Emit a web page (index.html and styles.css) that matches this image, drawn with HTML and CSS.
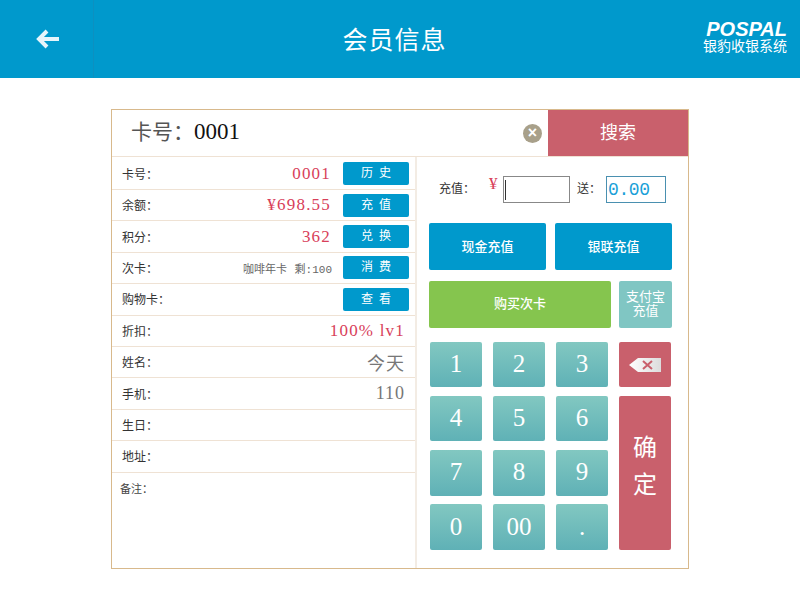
FILE: index.html
```html
<!DOCTYPE html>
<html lang="zh-CN">
<head>
  <meta charset="UTF-8" />
  <title>会员信息</title>
  <link rel="stylesheet" href="styles.css">
</head>
<body>
  <header class="topbar">
    <div class="back">
      <svg width="24" height="20" viewBox="0 0 24 20"><path d="M12 2 L4 10 L12 18 M4 10 H24" fill="none" stroke="#e6f5fb" stroke-width="4"/></svg>
    </div>
    <h1>会员信息</h1>
    <div class="logo">
      <div class="logo-en">POSPAL</div>
      <div class="logo-cn">银豹收银系统</div>
    </div>
  </header>

  <main class="card">
    <div class="search">
      <div class="search-text"><span class="search-label">卡号：</span><span class="search-no">0001</span></div>
      <span class="clear">×</span>
      <div class="search-btn">搜索</div>
    </div>
    <div class="body">
      <section class="info">
        <div class="row"><span class="label">卡号：</span><span class="val red">0001</span><span class="btn">历 史</span></div>
        <div class="row"><span class="label">余额：</span><span class="val red">¥698.55</span><span class="btn">充 值</span></div>
        <div class="row"><span class="label">积分：</span><span class="val red">362</span><span class="btn">兑 换</span></div>
        <div class="row"><span class="label">次卡：</span><span class="val small">咖啡年卡 剩:100</span><span class="btn">消 费</span></div>
        <div class="row"><span class="label">购物卡：</span><span class="val"></span><span class="btn">查 看</span></div>
        <div class="row"><span class="label">折扣：</span><span class="val red wide">100% lv1</span></div>
        <div class="row"><span class="label">姓名：</span><span class="val gray wide">今天</span></div>
        <div class="row"><span class="label">手机：</span><span class="val gray wide">110</span></div>
        <div class="row"><span class="label">生日：</span></div>
        <div class="row"><span class="label">地址：</span></div>
        <div class="note">备注：</div>
      </section>

      <section class="pay">
        <div class="charge">
          <span class="label">充值：</span>
          <span class="yen">¥</span>
          <span class="input amount"><i class="caret"></i></span>
          <span class="label send">送：</span>
          <span class="input gift">0.00</span>
        </div>
        <div class="pay-row">
          <div class="big blue">现金充值</div>
          <div class="big blue">银联充值</div>
        </div>
        <div class="pay-row second">
          <div class="big green">购买次卡</div>
          <div class="big teal">支付宝<br>充值</div>
        </div>
        <div class="keypad">
          <div class="key">1</div>
          <div class="key">2</div>
          <div class="key">3</div>
          <div class="key-red">
            <svg width="32" height="16" viewBox="0 0 32 16">
              <defs><linearGradient id="bs" x1="0" x2="1" y1="0" y2="0"><stop offset="0" stop-color="#ffffff"/><stop offset="1" stop-color="#dcdcdc"/></linearGradient></defs>
              <path d="M0 8 L9 1 H32 V15 H9 Z" fill="url(#bs)"/>
              <path d="M14 4 L23 12 M23 4 L14 12" stroke="#c9606c" stroke-width="2"/>
            </svg>
          </div>
          <div class="key">4</div>
          <div class="key">5</div>
          <div class="key">6</div>
          <div class="key-red confirm"><span>确</span><span>定</span></div>
          <div class="key">7</div>
          <div class="key">8</div>
          <div class="key">9</div>
          <div class="key">0</div>
          <div class="key">00</div>
          <div class="key">.</div>
        </div>
      </section>
    </div>
  </main>
</body>
</html>
```

FILE: styles.css
```css
* {
  box-sizing: border-box;
}
body {
  margin: 0;
  background: #fff;
  font-family: "Liberation Serif", "Noto Sans CJK SC", serif;
  color: #333;
}
.topbar {
  height: 78px;
  background: #0099cc;
  display: flex;
  align-items: center;
  color: #fff;
}
.back {
  width: 94px;
  height: 78px;
  border-right: 1px solid #0d90c0;
  display: flex;
  align-items: center;
  justify-content: center;
}
.topbar h1 {
  flex: 1;
  margin: -3px 0 0;
  padding-right: 5px;
  text-align: center;
  font-size: 25px;
  font-weight: normal;
  letter-spacing: 1px;
}
.logo {
  width: 100px;
  padding: 0 13px 5px 0;
  text-align: right;
}
.logo-en {
  font-family: "Liberation Sans", sans-serif;
  font-size: 20px;
  line-height: 17px;
  font-weight: bold;
  font-style: italic;
}
.logo-cn {
  font-family: "Noto Sans CJK SC", sans-serif;
  font-size: 14px;
  line-height: 15px;
  white-space: nowrap;
}

.card {
  width: 578px;
  height: 460px;
  margin: 31px 0 0 111px;
  border: 1px solid #d8b98c;
}
.search {
  height: 47px;
  display: flex;
  align-items: center;
  border-bottom: 1px solid #efe2d4;
}
.search-text {
  flex: 1;
  padding: 0 0 6px 19px;
  font-size: 21px;
}
.search-label {
  color: #555;
}
.search-no {
  color: #111;
  font-size: 23px;
}
.clear {
  width: 19px;
  height: 19px;
  margin-right: 6px;
  border-radius: 50%;
  background: #a8a08a;
  color: #fff;
  font: bold 16px/18px "Liberation Sans", sans-serif;
  text-align: center;
}
.search-btn {
  width: 140px;
  height: 46px;
  background: #c9606c;
  color: #fff;
  font-size: 18px;
  line-height: 46px;
  text-align: center;
}

.body {
  display: flex;
  height: 411px;
}
.info {
  width: 305px;
  border-right: 2px solid #f3ece4;
}
.row {
  height: 31.4px;
  display: flex;
  align-items: center;
  padding-right: 6px;
  border-bottom: 1px solid #efe2d4;
}
.row:first-child {
  height: 33px;
  padding-top: 1px;
}
.label {
  font-size: 12px;
  color: #333;
  white-space: nowrap;
}
.row .label {
  padding-left: 10px;
}
.val {
  flex: 1;
  text-align: right;
  padding-right: 12px;
  white-space: nowrap;
}
.val.wide {
  padding-right: 4px;
}
.red {
  color: #d8405a;
  font-size: 17px;
  letter-spacing: 1.2px;
}
.gray {
  color: #777;
  font-size: 18px;
  letter-spacing: 1px;
}
.small {
  color: #666;
  font-family: "Liberation Mono", "Noto Sans CJK SC", monospace;
  font-size: 11px;
  word-spacing: 1px;
  padding-right: 11px;
}
.btn {
  width: 66px;
  height: 23px;
  background: #0099cc;
  border-radius: 2px;
  color: #fff;
  font-size: 12px;
  line-height: 23px;
  text-align: center;
  word-spacing: 3px;
}
.note {
  padding: 7px 0 0 8px;
  font-size: 11px;
  color: #444;
}

.pay {
  flex: 1;
  padding: 19px 16px 0 12px;
}
.charge {
  height: 27px;
  display: flex;
  align-items: center;
  padding-left: 10px;
}
.charge .label {
  margin-top: -3px;
}
.yen {
  width: 9px;
  margin: -11px 5px 0 14px;
  color: #d8405a;
  font-size: 17px;
  line-height: 20px;
}
.input {
  display: flex;
  align-items: center;
  height: 27px;
  border: 1px solid #888;
  background: #fff;
}
.amount {
  width: 67px;
}
.caret {
  width: 1px;
  height: 20px;
  margin-left: 1px;
  background: #333;
}
.charge .send {
  margin-left: 7px;
  margin-right: 5px;
}
.gift {
  width: 60px;
  padding-left: 1px;
  border-color: #4a90b0;
  color: #1a9fd8;
  font-family: "Liberation Mono", monospace;
  font-size: 18px;
  letter-spacing: -0.4px;
}
.pay-row {
  display: flex;
  gap: 9px;
  margin-top: 20px;
}
.pay-row.second {
  margin-top: 11px;
  gap: 8px;
}
.big {
  height: 47px;
  border-radius: 2px;
  display: flex;
  align-items: center;
  justify-content: center;
  padding-bottom: 2px;
  color: #fff;
  font-size: 13px;
  font-weight: 500;
  text-align: center;
}
.blue {
  width: 117px;
  background: #0099cc;
}
.green {
  width: 182px;
  background: #85c54e;
  padding-bottom: 4px;
}
.teal {
  width: 53px;
  background: #80c6c3;
  font-weight: normal;
  line-height: 14px;
}
.keypad {
  display: grid;
  grid-template-columns: repeat(4, 52px);
  grid-template-rows: 45px 45.5px 46px 46px;
  column-gap: 11px;
  row-gap: 8.5px;
  margin: 14px 0 0 1px;
}
.key {
  border-radius: 2px;
  background: linear-gradient(#82c8c1, #5fb1b6);
  color: #fff;
  font-size: 25px;
  padding-bottom: 1px;
  display: flex;
  align-items: center;
  justify-content: center;
}
.key-red {
  border-radius: 2px;
  background: #c9606c;
  display: flex;
  align-items: center;
  justify-content: center;
}
.confirm {
  grid-column: 4;
  grid-row: 2 / span 3;
  flex-direction: column;
  gap: 2px;
  padding-bottom: 17px;
  color: #fff;
  font-size: 24px;
}
```
